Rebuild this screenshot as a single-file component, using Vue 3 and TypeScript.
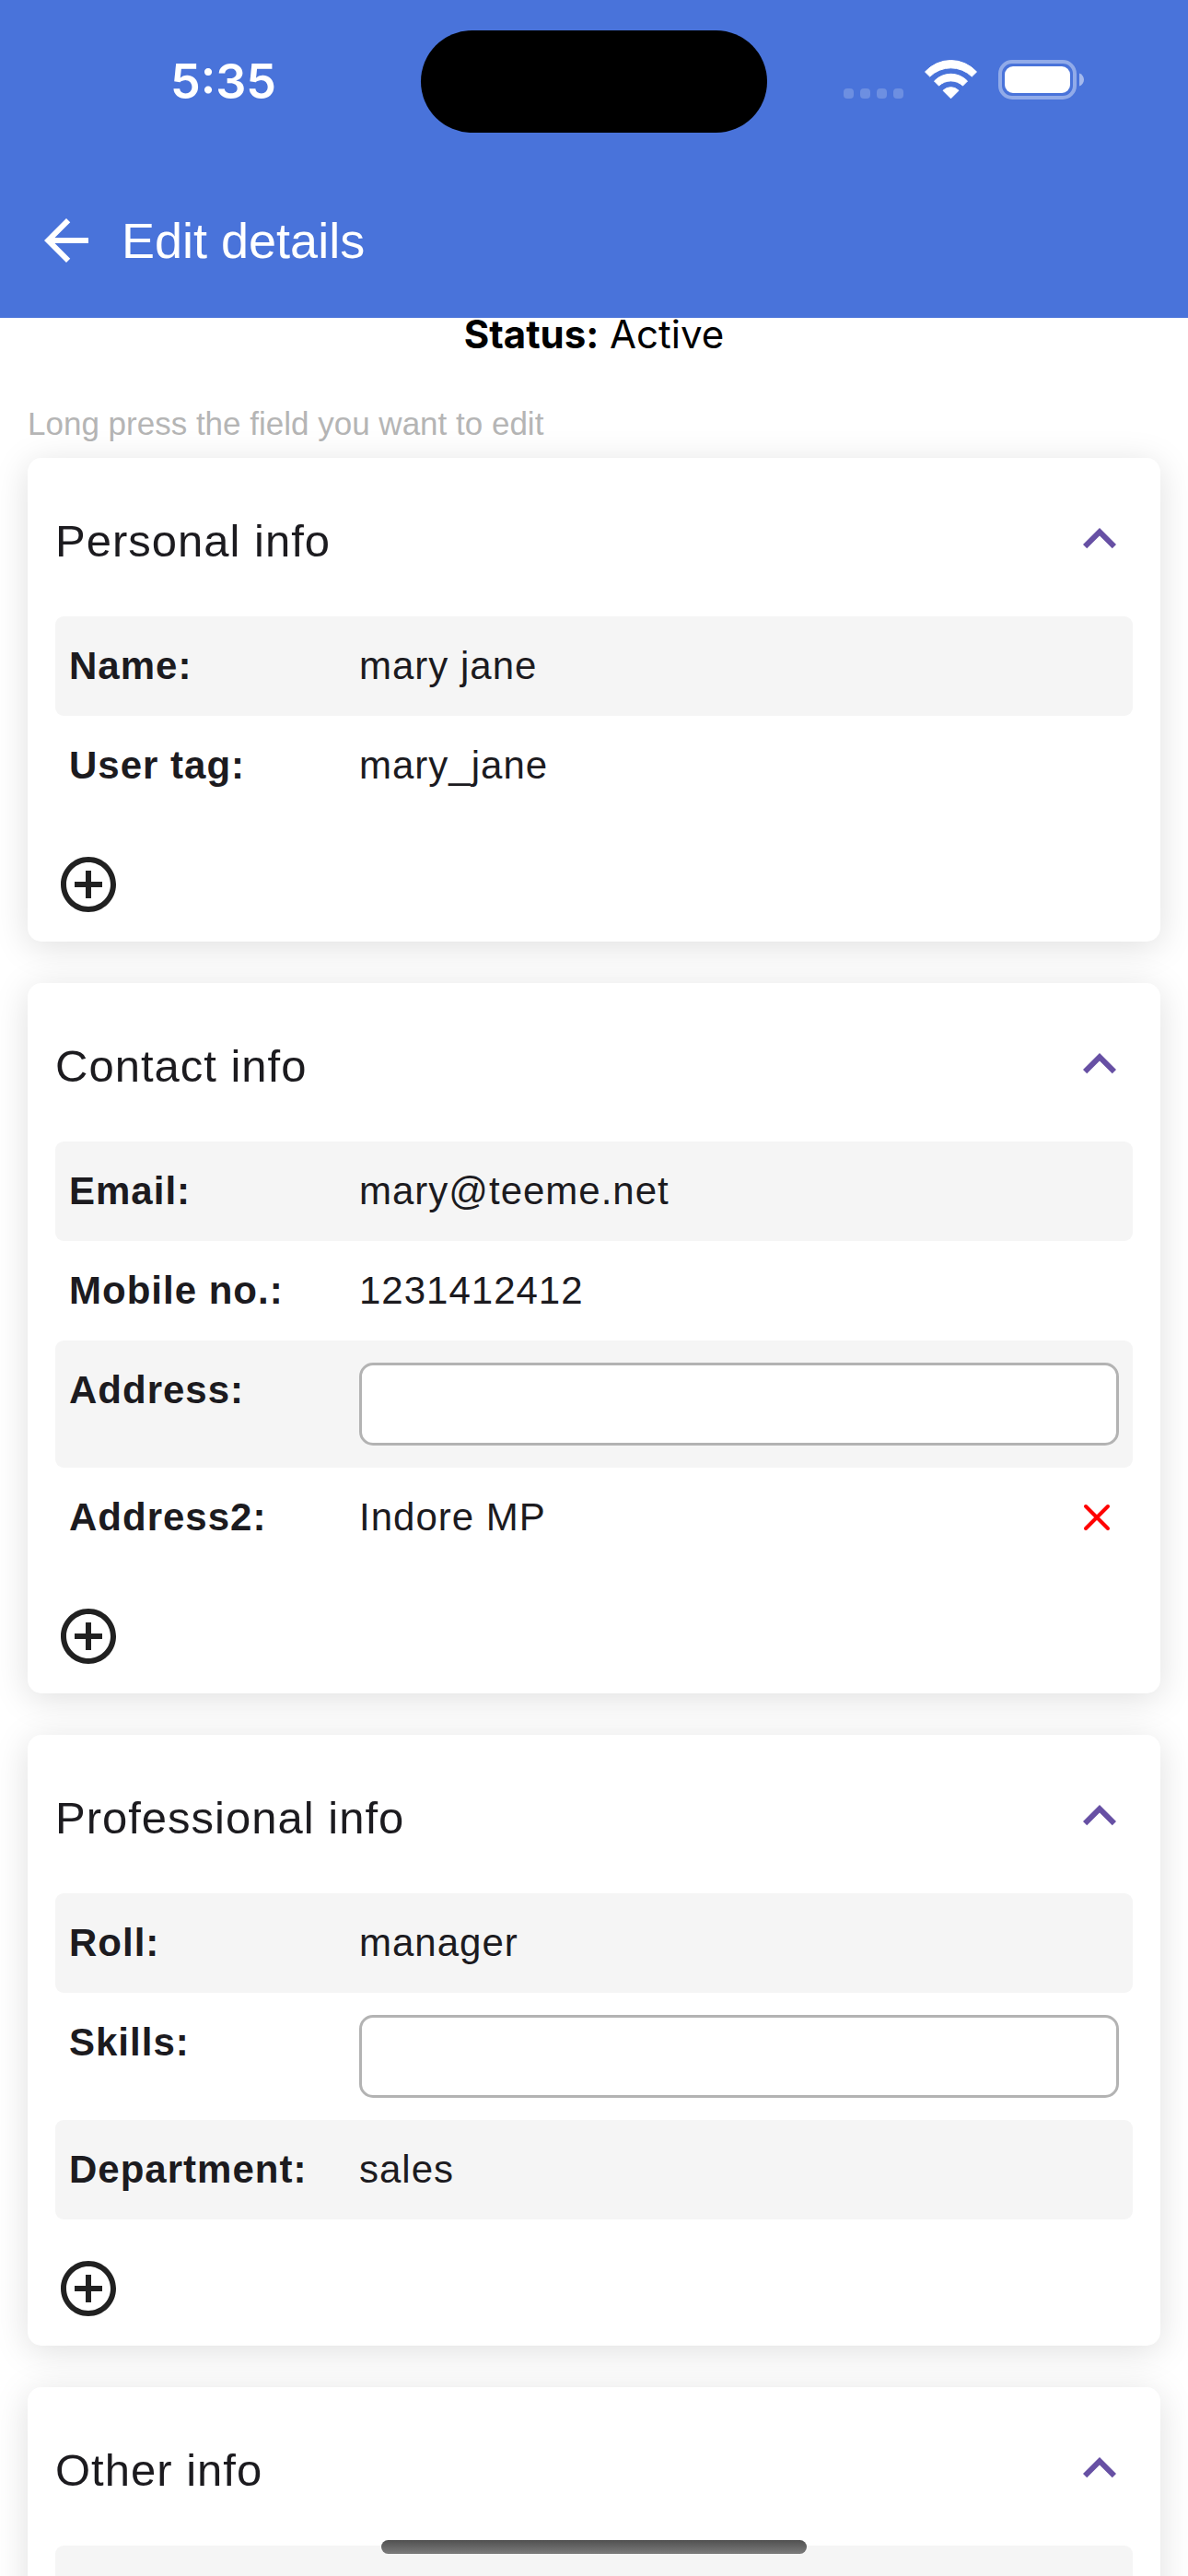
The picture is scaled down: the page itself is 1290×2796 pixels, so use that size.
<script setup lang="ts">
import { reactive } from 'vue'

interface Field {
  id: string
  label: string
  value: string
  editing?: boolean
  removable?: boolean
}

interface Section {
  title: string
  open: boolean
  fields: Field[]
}

const sections = reactive<Section[]>([
  {
    title: 'Personal info',
    open: true,
    fields: [
      { id: 'name', label: 'Name:', value: 'mary jane' },
      { id: 'tag', label: 'User tag:', value: 'mary_jane' },
    ],
  },
  {
    title: 'Contact info',
    open: true,
    fields: [
      { id: 'email', label: 'Email:', value: 'mary@teeme.net' },
      { id: 'mobile', label: 'Mobile no.:', value: '1231412412' },
      { id: 'address', label: 'Address:', value: '', editing: true },
      { id: 'address2', label: 'Address2:', value: 'Indore MP', removable: true },
    ],
  },
  {
    title: 'Professional info',
    open: true,
    fields: [
      { id: 'roll', label: 'Roll:', value: 'manager' },
      { id: 'skills', label: 'Skills:', value: '', editing: true },
      { id: 'department', label: 'Department:', value: 'sales' },
    ],
  },
  {
    title: 'Other info',
    open: true,
    fields: [{ id: 'other', label: '', value: '' }],
  },
])

function removeField(section: Section, field: Field) {
  section.fields = section.fields.filter((f) => f.id !== field.id)
}
</script>

<template>
  <div class="screen">
    <header class="header">
      <div class="status-bar">
        <span class="time">5:35</span>
        <div class="island"></div>
        <svg class="indicators" width="262" height="44" viewBox="0 0 262 44" aria-hidden="true">
          <g fill="#fff" fill-opacity="0.2">
            <rect x="0" y="31" width="11" height="11" rx="4" />
            <rect x="18" y="31" width="11" height="11" rx="4" />
            <rect x="36" y="31" width="11" height="11" rx="4" />
            <rect x="54" y="31" width="11" height="11" rx="4" />
          </g>
          <g fill="#fff" stroke="#fff" stroke-width="1" stroke-linejoin="round">
            <path d="M88.5 13A37.7 37.7 0 0 1 144.5 13L139.3 18.1A32.6 32.6 0 0 0 93.7 18.1Z" />
            <path d="M98.5 23A24.8 24.8 0 0 1 134.5 23L129.5 28.1A18.8 18.8 0 0 0 103.5 28.1Z" />
            <path d="M108 33.3A11.8 11.8 0 0 1 125 33.3L116.5 41.8Z" />
          </g>
          <rect x="170" y="2" width="81" height="39" rx="13" fill="none" stroke="#fff" stroke-opacity="0.4" stroke-width="4" />
          <rect x="175" y="7" width="71" height="29" rx="9" fill="#fff" />
          <path d="M256 14.5C259 15.5 261 18.5 261 21.5S259 27.5 256 28.5Z" fill="#fff" fill-opacity="0.5" />
        </svg>
      </div>
      <div class="title-bar">
        <button type="button" class="icon-button" aria-label="Back">
          <svg width="72" height="72" viewBox="0 0 24 24" fill="#fff" aria-hidden="true">
            <path d="M20 11H7.83l5.59-5.59L12 4l-8 8 8 8 1.41-1.41L7.83 13H20v-2z" />
          </svg>
        </button>
        <h1 class="title">Edit details</h1>
      </div>
    </header>

    <main>
      <p class="status"><strong>Status:</strong> Active</p>
      <p class="hint">Long press the field you want to edit</p>

      <div class="cards">
        <section v-for="section in sections" :key="section.title" class="card">
          <div class="card-head">
            <h2 class="card-title">{{ section.title }}</h2>
            <button
              type="button"
              class="icon-button"
              :aria-label="'Toggle ' + section.title"
              :aria-expanded="section.open"
              @click="section.open = !section.open"
            >
              <svg :class="{ closed: !section.open }" width="72" height="72" viewBox="0 0 24 24" fill="#6750a4" aria-hidden="true">
                <path d="M7.41 15.41 12 10.83l4.59 4.58L18 14l-6-6-6 6z" />
              </svg>
            </button>
          </div>
          <template v-if="section.open">
            <div v-for="field in section.fields" :key="field.id" class="row">
              <label v-if="field.editing" class="label" :for="field.id">{{ field.label }}</label>
              <span v-else class="label">{{ field.label }}</span>
              <input v-if="field.editing" :id="field.id" v-model="field.value" class="input" type="text" />
              <span v-else class="value">{{ field.value }}</span>
              <button
                v-if="field.removable"
                type="button"
                class="icon-button"
                aria-label="Remove field"
                @click="removeField(section, field)"
              >
                <svg width="48" height="48" viewBox="0 0 48 48" fill="none" stroke="#f00" stroke-width="4" stroke-linecap="round" aria-hidden="true">
                  <path d="M12 12 36 36M36 12 12 36" />
                </svg>
              </button>
            </div>
            <button type="button" class="icon-button add" aria-label="Add field">
              <svg width="72" height="72" viewBox="0 0 24 24" fill="#212121" aria-hidden="true">
                <path
                  d="M13 7h-2v4H7v2h4v4h2v-4h4v-2h-4V7zm-1-5C6.48 2 2 6.48 2 12s4.48 10 10 10 10-4.48 10-10S17.52 2 12 2zm0 18c-4.41 0-8-3.59-8-8s3.59-8 8-8 8 3.59 8 8-3.59 8-8 8z"
                />
              </svg>
            </button>
          </template>
        </section>
      </div>
    </main>
    <div class="home-indicator"></div>
  </div>
</template>

<style>
body {
  margin: 0;
  background: #fff;
}
</style>

<style scoped>
.screen {
  height: 100vh;
  overflow-y: auto;
  scrollbar-width: none;
  background: #fff;
  color: #1c1b1f;
  font-family: 'Liberation Sans', Arial, sans-serif;
}

h1,
h2,
p {
  margin: 0;
  font-weight: 400;
}

.icon-button {
  display: block;
  flex: none;
  padding: 0;
  border: 0;
  background: none;
  cursor: pointer;
}

.icon-button svg {
  display: block;
}

.closed {
  transform: rotate(180deg);
}

.header {
  position: sticky;
  top: 0;
  background: #4973da;
  color: #fff;
}

.status-bar {
  display: grid;
  grid-template-columns: 1fr auto 1fr;
  align-items: center;
  padding-top: 33px;
}

.time {
  padding-left: 185px;
  font: 600 52px/60px Inter, sans-serif;
}

.island {
  width: 376px;
  height: 111px;
  border-radius: 56px;
  background: #000;
}

.indicators {
  justify-self: end;
  margin: 0 112px 3px 0;
}

.title-bar {
  display: flex;
  align-items: center;
  gap: 24px;
  padding: 81px 36px 48px;
}

.title {
  font-size: 54px;
  line-height: 72px;
}

.status {
  color: #000;
  font: 400 42px/36px Inter, sans-serif;
  text-align: center;
}

.status strong {
  font-weight: 700;
}

.hint {
  margin: 54px 30px 12px;
  color: #b5b5b5;
  font-size: 35px;
  line-height: 50px;
}

.cards {
  display: flex;
  flex-direction: column;
  gap: 45px;
  padding: 0 30px 45px;
}

.card {
  padding: 52px 30px 26px;
  border-radius: 15px;
  background: #fff;
  box-shadow: 0 6px 38px rgba(0, 0, 0, 0.13);
}

.card-head {
  display: flex;
  align-items: flex-start;
  justify-content: space-between;
  margin-bottom: 44px;
}

.card-title {
  font-size: 49px;
  line-height: 76px;
  letter-spacing: 1px;
}

.row {
  display: flex;
  align-items: flex-start;
  min-height: 60px;
  padding: 24px 15px;
  border-radius: 9px;
  font-size: 42px;
  line-height: 60px;
  letter-spacing: 1px;
}

.row:nth-child(even) {
  background: #f5f5f5;
}

.label {
  flex: none;
  width: 315px;
  font-weight: 700;
}

.value {
  flex: 1;
}

.row .icon-button {
  align-self: center;
}

.input {
  flex: 1;
  box-sizing: border-box;
  min-width: 0;
  height: 90px;
  padding: 0 24px;
  border: 3px solid #b3b3b3;
  border-radius: 15px;
  outline: none;
  background: #fff;
  color: inherit;
  font: inherit;
}

.add {
  margin-top: 39px;
}

.home-indicator {
  position: fixed;
  bottom: 24px;
  left: 50%;
  width: 462px;
  height: 15px;
  margin-left: -231px;
  border-radius: 8px;
  background: linear-gradient(#505050, #7c7c7c);
}
</style>
